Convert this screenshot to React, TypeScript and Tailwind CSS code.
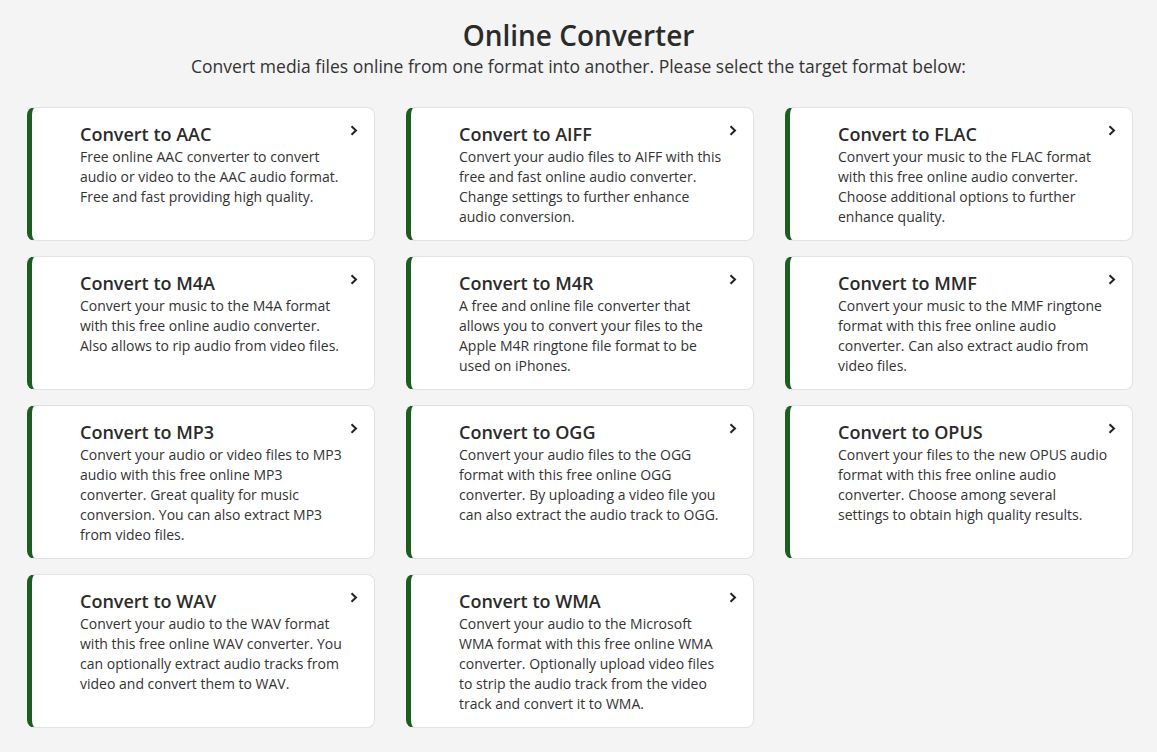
const formats = [
  { name: "AAC", text: "Free online AAC converter to convert audio or video to the AAC audio format. Free and fast providing high quality." },
  { name: "AIFF", text: "Convert your audio files to AIFF with this free and fast online audio converter. Change settings to further enhance audio conversion." },
  { name: "FLAC", text: "Convert your music to the FLAC format with this free online audio converter. Choose additional options to further enhance quality." },
  { name: "M4A", text: "Convert your music to the M4A format with this free online audio converter. Also allows to rip audio from video files." },
  { name: "M4R", text: "A free and online file converter that allows you to convert your files to the Apple M4R ringtone file format to be used on iPhones." },
  { name: "MMF", text: "Convert your music to the MMF ringtone format with this free online audio converter. Can also extract audio from video files." },
  { name: "MP3", text: "Convert your audio or video files to MP3 audio with this free online MP3 converter. Great quality for music conversion. You can also extract MP3 from video files." },
  { name: "OGG", text: "Convert your audio files to the OGG format with this free online OGG converter. By uploading a video file you can also extract the audio track to OGG." },
  { name: "OPUS", text: "Convert your files to the new OPUS audio format with this free online audio converter. Choose among several settings to obtain high quality results." },
  { name: "WAV", text: "Convert your audio to the WAV format with this free online WAV converter. You can optionally extract audio tracks from video and convert them to WAV." },
  { name: "WMA", text: "Convert your audio to the Microsoft WMA format with this free online WMA converter. Optionally upload video files to strip the audio track from the video track and convert it to WMA." },
];

function Chevron() {
  return (
    <svg width="8" height="11" viewBox="0 0 8 11" className="mt-[3px] ml-auto shrink-0">
      <path d="M1.5 1.2 L6 5.5 L1.5 9.8" fill="none" stroke="#222" strokeWidth="2" />
    </svg>
  );
}

export default function App() {
  return (
    <div className="min-h-[752px] bg-[#f4f4f4] text-[#333] font-['Open_Sans',sans-serif]">
      <div className="flex flex-col items-center pt-[17px]">
        <h1 className="text-[28px] leading-[36px] font-semibold text-[#2b2b2b]">Online Converter</h1>
        <p className="text-[17.5px] leading-[26px] text-[#333]">
          Convert media files online from one format into another. Please select the target format below:
        </p>
      </div>
      <div className="grid grid-cols-3 gap-x-[31px] gap-y-[15px] pl-[27px] pr-[24px] mt-[28px] pb-[23px]">
        {formats.map((f) => (
          <a
            key={f.name}
            href="#"
            className="flex bg-white rounded-[8px] border border-[#e2e2e2] border-l-[5px] border-l-[#1b5e20] pl-[48px] pr-[18px] pt-[14px] pb-[13px]"
          >
            <div className="w-[269.5px] shrink-0">
              <div className="text-[18px] leading-[24px] font-semibold text-[#2b2b2b]">Convert to {f.name}</div>
              <div className="text-[14px] leading-[20px] text-[#333] mt-[1px]">{f.text}</div>
            </div>
            <Chevron />
          </a>
        ))}
      </div>
    </div>
  );
}
